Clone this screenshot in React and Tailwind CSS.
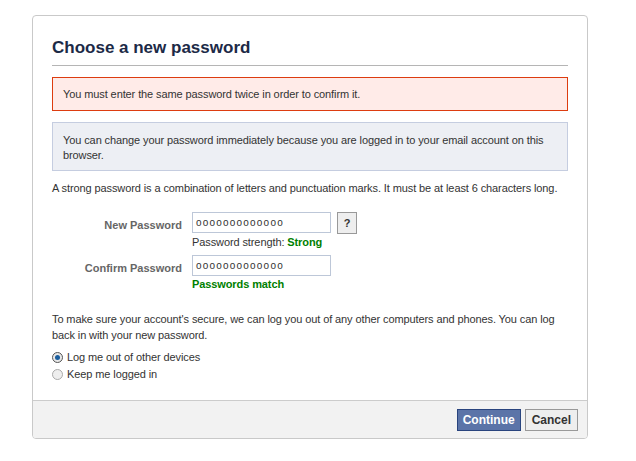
export default function App() {
  return (
    <div className="w-[636px] h-[461px] bg-white pt-[15px] pl-[32px]" style={{ fontFamily: '"Liberation Sans", Arial, sans-serif' }}>
      <div className="w-[556px] h-[424px] border border-[#c9c9c9] rounded-[4px] bg-white flex flex-col overflow-hidden">
        <div className="flex-1 px-[19px] pt-[20px] text-[11px] text-[#333] tracking-[-0.1px]">
          <h1 className="text-[17px] font-bold text-[#1c2a47] leading-[24px] pb-[5px] border-b border-[#b5b5b5] tracking-normal">Choose a new password</h1>
          <div className="mt-[11px] h-[34px] border border-[#dd3c10] bg-[#ffebe8] px-[10px] flex items-center">
            You must enter the same password twice in order to confirm it.
          </div>
          <div className="mt-[11px] h-[49px] border border-[#c5cde0] bg-[#edeff4] px-[10px] py-[10px] leading-[15px]">
            You can change your password immediately because you are logged in to your email account on this browser.
          </div>
          <p className="mt-[10px] leading-[15px] whitespace-nowrap">A strong password is a combination of letters and punctuation marks. It must be at least 6 characters long.</p>
          <div className="mt-[16px] flex">
            <div className="w-[140px] text-right pr-[10px] pt-[5px] font-bold text-[#666] text-[11px] tracking-normal">New Password</div>
            <div>
              <div className="flex items-start">
                <div className="w-[139px] h-[21px] border border-[#bdc7d8] px-[3px] flex items-center text-[10px] tracking-[1.2px] text-[#333]">ooooooooooooo</div>
                <div className="ml-[6px] w-[20px] h-[22px] border border-[#999] bg-[#eee] flex items-center justify-center font-bold text-[#333]">?</div>
              </div>
              <div className="mt-[1px] leading-[14px]">Password strength: <span className="font-bold text-[#008000]">Strong</span></div>
            </div>
          </div>
          <div className="mt-[6px] flex">
            <div className="w-[140px] text-right pr-[10px] pt-[5px] font-bold text-[#666] text-[11px] tracking-normal">Confirm Password</div>
            <div>
              <div className="w-[139px] h-[21px] border border-[#bdc7d8] px-[3px] flex items-center text-[10px] tracking-[1.2px] text-[#333]">ooooooooooooo</div>
              <div className="mt-[1px] leading-[14px] font-bold text-[#008000]">Passwords match</div>
            </div>
          </div>
          <p className="mt-[20px] leading-[16px]">To make sure your account's secure, we can log you out of any other computers and phones. You can log back in with your new password.</p>
          <div className="mt-[6px] flex items-center h-[17px]">
            <span className="w-[11px] h-[11px] rounded-full border border-[#555] bg-[#e8e8e8] flex items-center justify-center mr-[4px]"><span className="w-[5px] h-[5px] rounded-full bg-[#1b5e9e]"></span></span>
            Log me out of other devices
          </div>
          <div className="flex items-center h-[17px]">
            <span className="w-[11px] h-[11px] rounded-full border border-[#aaa] bg-[#eee] mr-[4px]"></span>
            Keep me logged in
          </div>
        </div>
        <div className="h-[38px] border-t border-[#ccc] bg-[#f2f2f2] flex items-center justify-end pr-[9px] gap-[4px]">
          <button className="h-[22px] px-[5px] border border-[#29447e] bg-[#5b74a8] text-white font-bold text-[12px]">Continue</button>
          <button className="h-[22px] px-[6px] border border-[#999] bg-[#eee] text-[#333] font-bold text-[12px]">Cancel</button>
        </div>
      </div>
    </div>
  );
}
